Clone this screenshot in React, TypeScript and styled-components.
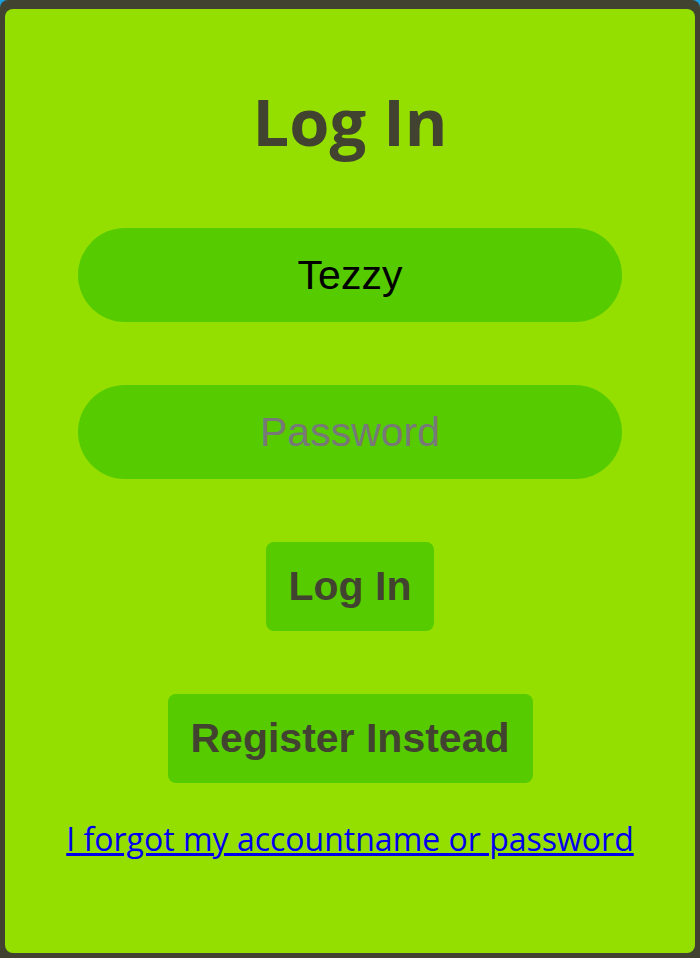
import React from "react";
import styled, { createGlobalStyle } from "styled-components";

const Global = createGlobalStyle`
  html, body {
    margin: 0;
    padding: 0;
    background: #1ba1e2;
  }
  * { box-sizing: border-box; }
`;

const Frame = styled.div`
  background: #414330;
  border-radius: 8px 8px 0 0;
  padding: 9px 5px 5px;
  height: 958px;
  overflow: hidden;
`;

const Card = styled.main`
  background: #94df00;
  border-radius: 8px;
  height: 944px;
  display: flex;
  flex-direction: column;
  align-items: center;
`;

const Title = styled.h1`
  margin: 72px 0 0;
  font-family: "Open Sans", "Noto Sans", sans-serif;
  font-weight: 700;
  font-size: 65px;
  line-height: 80px;
  color: #414330;
`;

const Form = styled.form`
  display: flex;
  flex-direction: column;
  align-items: center;
  gap: 63px;
  margin-top: 67px;
`;

const Field = styled.input`
  width: 544px;
  height: 94px;
  border: none;
  outline: none;
  border-radius: 47px;
  background: #55cb00;
  text-align: center;
  font-family: "Liberation Sans", Arial, sans-serif;
  font-size: 41px;
  color: #000;
  padding: 0 20px;
  &::placeholder {
    color: #787878;
  }
`;

const Button = styled.button`
  height: 89px;
  padding: 0 23px;
  border: none;
  border-radius: 8px;
  background: #55cb00;
  color: #414330;
  font-family: "Liberation Sans", Arial, sans-serif;
  font-weight: 700;
  font-size: 41px;
  cursor: pointer;
`;

const Link = styled.a`
  margin-top: 34px;
  font-family: "Open Sans", "Noto Sans", sans-serif;
  font-size: 32px;
  color: #0000ee;
  text-decoration: underline;
`;

export default function App() {
  return (
    <>
      <Global />
      <Frame>
        <Card>
          <Title>Log In</Title>
          <Form onSubmit={(e) => e.preventDefault()}>
            <Field type="text" defaultValue="Tezzy" />
            <Field type="password" placeholder="Password" />
            <Button type="submit">Log In</Button>
            <Button type="button">Register Instead</Button>
          </Form>
          <Link href="#">I forgot my accountname or password</Link>
        </Card>
      </Frame>
    </>
  );
}
